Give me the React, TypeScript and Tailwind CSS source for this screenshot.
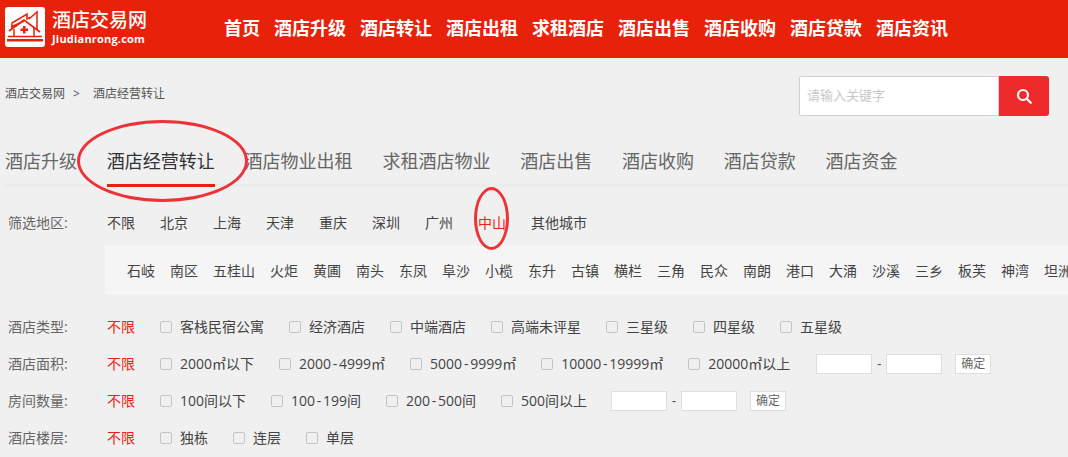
const nav = ['首页','酒店升级','酒店转让','酒店出租','求租酒店','酒店出售','酒店收购','酒店贷款','酒店资讯'];
const tabs = ['酒店升级','酒店经营转让','酒店物业出租','求租酒店物业','酒店出售','酒店收购','酒店贷款','酒店资金'];
const cities = ['不限','北京','上海','天津','重庆','深圳','广州','中山','其他城市'];
const towns = ['石岐','南区','五桂山','火炬','黄圃','南头','东凤','阜沙','小榄','东升','古镇','横栏','三角','民众','南朗','港口','大涌','沙溪','三乡','板芙','神湾','坦洲'];

function Logo() {
  return (
    <svg width="40" height="40" viewBox="0 0 40 40" className="shrink-0">
      <rect width="40" height="40" rx="3" fill="#fff" />
      <g fill="none" stroke="#e8220a" strokeWidth="1.500">
        <path d="M4 24 L19 13 L35 25" strokeWidth="1.800" />
        <path d="M6 20 L19 14 M7 22 V16 L22 7 V12 L25 10 M24 12 L32 5 V23" />
        <path d="M9 22 V30 M29 20 V30" />
        <path d="M3 29.500 H37" />
      </g>
      <path d="M18 19 h2.500 v2.500 h2.500 v2.500 h-2.500 v2.500 h-2.500 v-2.500 h-2.500 v-2.500 h2.500 z" fill="#e8220a" />
      <rect x="2" y="32" width="36" height="2.500" fill="#e8220a" />
    </svg>
  );
}

function Label({ text }: { text: string }) {
  const parts = text.split('-');
  if (parts.length === 1) return <span className="whitespace-nowrap">{text}</span>;
  return (
    <span className="whitespace-nowrap">
      {parts[0]}<span className="mx-[1.750px]">-</span>{parts[1]}
    </span>
  );
}

function Check({ label }: { label: string }) {
  return (
    <label className="flex items-center mr-[25px]">
      <span className="w-3 h-3 rounded-[2px] border border-[#c4c4c4] bg-[#f0f0f0] mr-2" />
      <Label text={label} />
    </label>
  );
}

function Range({ className }: { className: string }) {
  return (
    <div className={`flex items-center ${className}`}>
      <span className="w-[56px] h-5 bg-white border border-[#dedede]" />
      <span className="w-[14px] text-center text-[#555]">-</span>
      <span className="w-[56px] h-5 bg-white border border-[#dedede]" />
      <span className="ml-[13px] w-[36px] h-5 bg-white border border-[#dedede] flex items-center justify-center text-xs text-[#666]">确定</span>
    </div>
  );
}

function Row({ label, children }: { label: string; children: React.ReactNode }) {
  return (
    <div className="flex items-center h-[37px] pl-2">
      <span className="w-[99px] text-[#666]">{label}:</span>
      <span className="w-[53px] text-[#ee2211]">不限</span>
      {children}
    </div>
  );
}

export default function App() {
  return (
    <div className="relative w-[1068px] h-[457px] overflow-hidden bg-[#f0f0f0] text-[14px] text-[#444]" style={{ fontFamily: '"Open Sans", "Noto Sans CJK SC", sans-serif' }}>
      <header className="h-[58px] bg-[#e8220a] flex items-center pl-[5px] pb-[4px]">
        <Logo />
        <div className="ml-[7px] w-[172px] text-white">
          <div className="text-[19px] leading-[24px] font-medium">酒店交易网</div>
          <div className="text-[11px] leading-[14px] font-bold tracking-[0.2px]">Jiudianrong.com</div>
        </div>
        <nav className="flex gap-[14px] text-white text-[18px] font-bold leading-[24px] pt-[2px]">
          {nav.map((n) => <a key={n} className="whitespace-nowrap">{n}</a>)}
        </nav>
      </header>

      <div className="flex items-center justify-between h-[40px] mt-[18px] pr-[19px]">
        <div className="flex pl-[5px] pb-[4px] text-xs text-[#555]">
          <span>酒店交易网</span>
          <span className="ml-[8px] mr-[13px]">&gt;</span>
          <span>酒店经营转让</span>
        </div>
        <div className="flex h-[40px]">
          <div className="w-[200px] border border-[#d0d0d0] rounded-l-[2px] bg-white flex items-center pl-[7px] text-[13px] text-[#c8c8c8]">请输入关键字</div>
          <button className="w-[50px] bg-[#ee2a2a] rounded-r-[3px] flex items-center justify-center">
            <svg width="17" height="17" viewBox="0 0 17 17" fill="none" stroke="#fff" strokeWidth="2.200">
              <circle cx="7" cy="7" r="5" />
              <path d="M10.700 10.700 L15.500 15.500" />
            </svg>
          </button>
        </div>
      </div>

      <div className="flex gap-[29.800px] mt-[33px] ml-[5px] h-[35px] border-b-[3px] border-[#ececec] text-[18px] leading-[24px] text-[#666] box-content">
        {tabs.map((t, i) => (
          <a key={t} className={`h-[35px] whitespace-nowrap ${i === 1 ? 'text-[#333] border-b-[3px] border-[#e8220a] box-content' : ''}`}>{t}</a>
        ))}
      </div>

      <div className="flex items-center h-[45px] pl-2 mt-[13px] leading-none">
        <span className="w-[99px] text-[#666]">筛选地区:</span>
        <div className="flex gap-[25px]">
          {cities.map((c) => <span key={c} className={`whitespace-nowrap ${c === '中山' ? 'text-[#ee2211]' : ''}`}>{c}</span>)}
        </div>
      </div>
      <div className="ml-[105px] h-[50px] bg-[#f5f5f5] flex items-center gap-[15px] pl-[22px] overflow-hidden">
        {towns.map((t) => <span key={t} className="whitespace-nowrap shrink-0">{t}</span>)}
      </div>

      <div className="mt-[13px]">
        <Row label="酒店类型">
          {['客栈民宿公寓','经济酒店','中端酒店','高端未评星','三星级','四星级','五星级'].map((t) => <Check key={t} label={t} />)}
        </Row>
        <Row label="酒店面积">
          {['2000㎡以下','2000-4999㎡','5000-9999㎡','10000-19999㎡','20000㎡以上'].map((t) => <Check key={t} label={t} />)}
          <Range className="ml-px" />
        </Row>
        <Row label="房间数量">
          {['100间以下','100-199间','200-500间','500间以上'].map((t) => <Check key={t} label={t} />)}
          <Range className="-ml-px" />
        </Row>
        <Row label="酒店楼层">
          {['独栋','连层','单层'].map((t) => <Check key={t} label={t} />)}
        </Row>
      </div>

      <div className="absolute left-[77px] top-[120px] w-[171px] h-[82px] rounded-[50%] border-[3px] border-[#ee3338]" />
      <div className="absolute left-[474px] top-[187px] w-[35px] h-[63px] rounded-[50%] border-[3px] border-[#ee3338]" />
    </div>
  );
}
